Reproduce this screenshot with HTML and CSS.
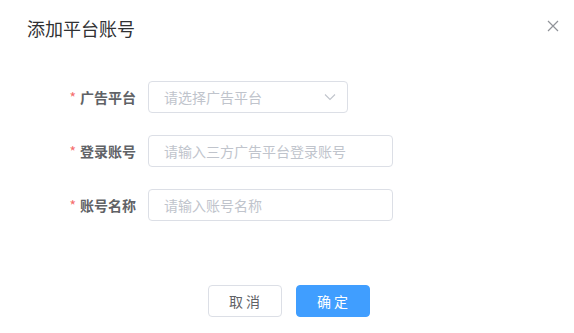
FILE: index.html
```html
<!DOCTYPE html>
<html lang="zh">
<head>
<meta charset="utf-8">
<link rel="stylesheet" href="styles.css">
</head>
<body>
<div class="dialog">
  <div class="header">
    <span class="title">添加平台账号</span>
    <button class="close" aria-label="close">
      <svg width="12" height="12" viewBox="0 0 12 12"><path d="M1 1L11 11M11 1L1 11" stroke="#909399" stroke-width="1.2" fill="none"/></svg>
    </button>
  </div>
  <div class="form">
    <div class="row">
      <label class="label"><span class="req">*</span>广告平台</label>
      <div class="field select">
        <span class="ph">请选择广告平台</span>
        <svg class="arrow" width="12" height="8" viewBox="0 0 12 8"><path d="M1 1.5L6 6.5L11 1.5" stroke="#C0C4CC" stroke-width="1.1" fill="none"/></svg>
      </div>
    </div>
    <div class="row">
      <label class="label"><span class="req">*</span>登录账号</label>
      <div class="field input"><span class="ph">请输入三方广告平台登录账号</span></div>
    </div>
    <div class="row">
      <label class="label"><span class="req">*</span>账号名称</label>
      <div class="field input"><span class="ph">请输入账号名称</span></div>
    </div>
  </div>
  <div class="footer">
    <button class="btn">取 消</button>
    <button class="btn primary">确 定</button>
  </div>
</div>
</body>
</html>
```

FILE: styles.css
```css
html, body {
  margin: 0;
  padding: 0;
  background: #fff;
}
body {
  font-family: "Microsoft YaHei", "Noto Sans CJK SC", "Noto Sans", sans-serif;
  color: #606266;
}
.dialog {
  width: 574px;
  height: 333px;
  position: relative;
}
.header {
  padding: 16px 20px 0 27px;
  height: 24px;
}
.title {
  font-size: 18px;
  line-height: 24px;
  color: #303133;
}
.close {
  position: absolute;
  top: 20px;
  right: 15px;
  width: 12px;
  height: 12px;
  padding: 0;
  border: 0;
  background: transparent;
  display: flex;
}
.form {
  margin-top: 41px;
  display: flex;
  flex-direction: column;
  gap: 22px;
}
.row {
  display: flex;
  align-items: center;
  height: 32px;
}
.label {
  width: 136px;
  margin-right: 12px;
  text-align: right;
  font-size: 14px;
  font-weight: bold;
  color: #606266;
  line-height: 32px;
}
.req {
  color: #F56C6C;
  font-weight: normal;
  margin-right: 4px;
}
.field {
  box-sizing: border-box;
  height: 32px;
  border: 1px solid #DCDFE6;
  border-radius: 4px;
  padding: 0 15px;
  display: flex;
  align-items: center;
  font-size: 14px;
}
.select {
  width: 200px;
  justify-content: space-between;
  padding-right: 11px;
}
.input {
  width: 245px;
}
.ph {
  color: #C0C4CC;
  line-height: 30px;
}
.footer {
  margin-top: 64px;
  display: flex;
  justify-content: center;
  gap: 14px;
  padding-left: 3px;
}
.btn {
  box-sizing: border-box;
  width: 74px;
  height: 32px;
  border: 1px solid #DCDFE6;
  border-radius: 4px;
  background: #fff;
  color: #606266;
  font-family: inherit;
  font-size: 14px;
  padding: 0;
}
.btn.primary {
  background: #409EFF;
  border-color: #409EFF;
  color: #fff;
}
```
